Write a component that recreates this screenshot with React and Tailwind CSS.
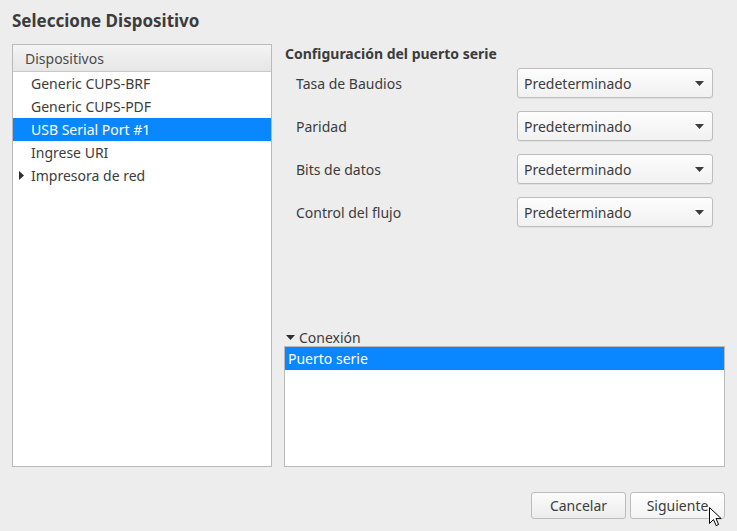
import React from "react";

const font = { fontFamily: '"Noto Sans", "Open Sans", sans-serif' };

function Combo() {
  return (
    <div className="flex h-[30px] w-[196px] items-center justify-between rounded-[3px] border border-[#bdbdbd] bg-gradient-to-b from-[#fdfdfd] to-[#f1f1f1] pl-[6px] pr-[8px] shadow-[0_1px_0_rgba(0,0,0,0.05)]">
      <span className="text-[14px] text-[#3c3c3c]">Predeterminado</span>
      <svg width="9" height="5" viewBox="0 0 9 5"><path d="M0 0H9L4.5 5Z" fill="#3c3c3c" /></svg>
    </div>
  );
}

function FormRow({ label }) {
  return (
    <div className="flex h-[30px] items-center justify-between pl-[12px] pr-[12px]">
      <span className="text-[14px] text-[#3c3c3c]">{label}</span>
      <Combo />
    </div>
  );
}

export default function App() {
  return (
    <div style={font} className="relative flex h-[531px] w-[737px] flex-col bg-[#ededed] px-[12px] pt-[10px] text-[#3c3c3c]">
      <div className="h-[34px] text-[17px] font-bold leading-[22px] text-[#3c3c3c]">Seleccione Dispositivo</div>
      <div className="flex h-[423px] gap-[12px]">
        <div className="flex w-[260px] flex-col border border-[#bababa] bg-white">
          <div className="flex h-[27px] items-center border-b border-[#c8c8c8] bg-gradient-to-b from-[#f4f4f4] to-[#e6e6e6] pl-[12px] text-[14px] text-[#4a4a4a]">Dispositivos</div>
          <div className="flex h-[23px] items-center pl-[18px] text-[14px]">Generic CUPS-BRF</div>
          <div className="flex h-[23px] items-center pl-[18px] text-[14px]">Generic CUPS-PDF</div>
          <div className="flex h-[23px] items-center bg-[#0a86fe] pl-[18px] text-[14px] text-white">USB Serial Port #1</div>
          <div className="flex h-[23px] items-center pl-[18px] text-[14px]">Ingrese URI</div>
          <div className="flex h-[23px] items-center pl-[6px] text-[14px]">
            <svg width="5" height="9" viewBox="0 0 5 9" className="mr-[7px]"><path d="M0 0V9L5 4.5Z" fill="#2e2e2e" /></svg>
            Impresora de red
          </div>
        </div>
        <div className="flex flex-1 flex-col">
          <div className="pl-[1px] pt-[1px] text-[14px] font-bold leading-[18px]">Configuración del puerto serie</div>
          <div className="mt-[5px] flex flex-col gap-[13px]">
            <FormRow label="Tasa de Baudios" />
            <FormRow label="Paridad" />
            <FormRow label="Bits de datos" />
            <FormRow label="Control del flujo" />
          </div>
          <div className="flex-1" />
          <div className="flex h-[18px] items-center pl-[2px] text-[14px]">
            <svg width="9" height="5" viewBox="0 0 9 5" className="mr-[4px]"><path d="M0 0H9L4.5 5Z" fill="#2e2e2e" /></svg>
            Conexión
          </div>
          <div className="flex h-[121px] flex-col border border-[#bababa] bg-white">
            <div className="flex h-[23px] items-center bg-[#0a86fe] pl-[3px] text-[14px] text-white">Puerto serie</div>
          </div>
        </div>
      </div>
      <div className="mt-[25px] flex justify-end gap-[4px]">
        <button className="h-[27px] w-[95px] rounded-[3px] border border-[#bcbcbc] bg-gradient-to-b from-[#fbfbfb] to-[#ececec] text-[14px] text-[#3c3c3c]">Cancelar</button>
        <button className="h-[27px] w-[95px] rounded-[3px] border border-[#bcbcbc] bg-gradient-to-b from-[#ffffff] to-[#f3f3f3] text-[14px] text-[#3c3c3c]">Siguiente</button>
      </div>
      <svg className="absolute left-[709px] top-[507px]" width="13" height="20" viewBox="0 0 13 20">
        <path d="M0.5 0.5V16.5L4.5 12.5L7.2 18.6L9.6 17.5L7 11.6H12.2Z" fill="#ffffff" stroke="#000000" strokeWidth="1" strokeLinejoin="round" />
      </svg>
    </div>
  );
}
